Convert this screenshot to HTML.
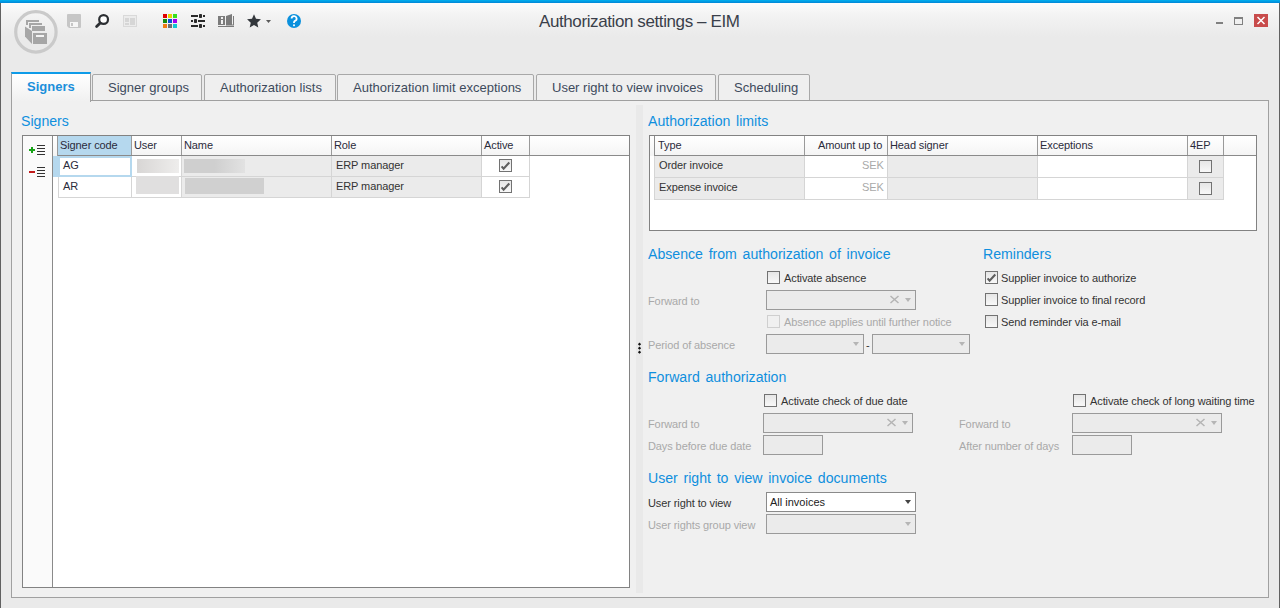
<!DOCTYPE html>
<html><head><meta charset="utf-8">
<style>
*{box-sizing:border-box;margin:0;padding:0}
html,body{width:1280px;height:608px;overflow:hidden}
body{position:relative;background:#eaeaea;font-family:"Liberation Sans",sans-serif;color:#333}
.a{position:absolute}
.t{position:absolute;white-space:nowrap;line-height:1}
.hd{color:#0f8fde;font-size:15.5px;word-spacing:2px;transform:scaleX(0.91);transform-origin:0 0}
.lbl{font-size:11px;color:#333;letter-spacing:-0.1px}
.dis{color:#a9a9a9}
.cb{position:absolute;width:13px;height:13px;border:1px solid #727272;background:linear-gradient(#e6e6e6,#f8f8f8)}
.cb.d{border-color:#cfcfcf;background:#f0f0f0}
.combo{position:absolute;border:1px solid #9a9a9a;background:#ebebeb}
.combo.en{background:#fff;border-color:#8a8a8a}
.arr{position:absolute;width:0;height:0;border-left:3.5px solid transparent;border-right:3.5px solid transparent;border-top:4px solid #b5b5b5}
.en .arr{border-top-color:#444}
.gr{position:absolute;background:#fff;border:1px solid #828282}
.gh{position:absolute;top:0;height:20px;background:linear-gradient(#fff,#f3f3f3);border-right:1px solid #a0a0a0;border-bottom:2px solid #8c8c8c}
.gc{position:absolute;border-right:1px solid #d9d9d9;border-bottom:1px solid #d9d9d9}
</style></head><body>
<!-- window chrome -->
<div class="a" style="left:0;top:0;width:1280px;height:3px;background:linear-gradient(#00b0f0,#0086d6)"></div>
<div class="a" style="left:0;top:3px;width:1280px;height:34px;background:linear-gradient(#fcfcfc,#f3f3f3 35%,#eaeaea)"></div>
<div class="a" style="left:0;top:3px;width:1px;height:605px;background:#616161"></div>
<div class="a" style="left:1279px;top:3px;width:1px;height:605px;background:#616161"></div>

<!-- logo -->
<svg class="a" style="left:0;top:0" width="320" height="60" viewBox="0 0 320 60">
<circle cx="35.9" cy="31.9" r="20.2" fill="none" stroke="#cacaca" stroke-width="3.2"/>
<g fill="#a6a6a6">
<path d="M26 20h13v2H28v3h-2z"/>
<path d="M29 23h13v2H31v3h-2z"/>
<rect x="32" y="26" width="13" height="5"/>
<path d="M25 26.5L32 31V44L25 36.5z"/>
<rect x="33" y="33" width="14" height="11"/>
</g>
<rect x="36" y="35" width="8" height="2" fill="#f4f4f4"/>
<!-- save -->
<path d="M68 14h12a1 1 0 0 1 1 1v12a1 1 0 0 1 -1 1H69l-2-2V15a1 1 0 0 1 1-1z" fill="#c6c6c6"/>
<rect x="70" y="22" width="8" height="5" fill="#f6f6f6"/>
<rect x="71" y="23" width="2" height="3" fill="#c6c6c6"/>
<!-- search -->
<circle cx="103.6" cy="19.5" r="4.4" fill="#fff" stroke="#2c2f33" stroke-width="2.2"/>
<line x1="100.2" y1="23" x2="96.6" y2="26.6" stroke="#2c2f33" stroke-width="2.8" stroke-linecap="round"/>
<!-- layout -->
<rect x="123.5" y="15.5" width="13" height="11" fill="#ececec" stroke="#d9d9d9"/>
<rect x="125" y="18" width="4" height="4" fill="#d6d6d6"/>
<rect x="125" y="23" width="4" height="2" fill="#d6d6d6"/>
<rect x="130" y="18" width="5" height="7" fill="#d6d6d6"/>
<!-- color grid -->
<rect x="163" y="14" width="4" height="4" fill="#e00000"/>
<rect x="168" y="14" width="4" height="4" fill="#e6d500"/>
<rect x="173" y="14" width="4" height="4" fill="#35e01c"/>
<rect x="163" y="19" width="4" height="4" fill="#168a10"/>
<rect x="168" y="19" width="4" height="4" fill="#0a50d8"/>
<rect x="173" y="19" width="4" height="4" fill="#a000f0"/>
<rect x="163" y="24" width="4" height="4" fill="#f07a12"/>
<rect x="168" y="24" width="4" height="4" fill="#6b6f74"/>
<rect x="173" y="24" width="4" height="4" fill="#10c6d2"/>
<!-- sliders -->
<g fill="#2a2a2a">
<rect x="191" y="15" width="7" height="2"/><rect x="199" y="14" width="3" height="4" rx="0.8"/><rect x="203" y="15" width="2" height="2"/>
<rect x="191" y="20" width="2" height="2"/><rect x="194" y="19" width="3" height="4" rx="0.8"/><rect x="198" y="20" width="7" height="2"/>
<rect x="191" y="25" width="7" height="2"/><rect x="199" y="24" width="3" height="4" rx="0.8"/><rect x="203" y="25" width="2" height="2"/>
</g>
<!-- book -->
<g fill="#7b7b7b">
<rect x="218" y="16" width="7" height="9"/>
<path d="M226 16L232 14V25L226 25z"/>
<path d="M233 16h1v9.5h-8v-1h7z"/>
<rect x="218" y="26" width="16" height="1"/>
</g>
<rect x="221" y="17" width="2" height="2" fill="#f2f2f2"/><rect x="221" y="20" width="2" height="4" fill="#f2f2f2"/>
<!-- star -->
<path d="M254.00 14.30L256.00 18.85L260.94 19.34L257.23 22.65L258.29 27.51L254.00 25.00L249.71 27.51L250.77 22.65L247.06 19.34L252.00 18.85z" fill="#33373c"/>
<path d="M266 20h5l-2.5 3z" fill="#5a5a5a"/>
<!-- help -->
<circle cx="294" cy="21" r="7" fill="#0a90dd"/>
<path d="M291.6 18.6a2.5 2.5 0 1 1 3.4 2.3c-.8.4-1 .8-1 1.6v.6" fill="none" stroke="#fff" stroke-width="1.8"/>
<rect x="293.1" y="24.4" width="1.8" height="1.8" fill="#fff"/>
</svg>

<!-- title -->
<div class="t" style="left:539px;top:13px;font-size:17px;letter-spacing:-0.4px;color:#3a3f4a">Authorization settings – EIM</div>

<!-- window controls -->
<div class="a" style="left:1216px;top:22px;width:7px;height:2px;background:#808080"></div>
<div class="a" style="left:1234px;top:17px;width:9px;height:8px;border:1px solid #808080;border-top-width:2px"></div>
<div class="a" style="left:1254px;top:14px;width:14px;height:13px;background:#c84b4b"></div><svg class="a" style="left:1254px;top:14px" width="14" height="13"><path d="M3.5 3L10.5 10M10.5 3L3.5 10" stroke="#fff" stroke-width="1.5"/></svg>

<!-- tabs -->
<div class="a" style="left:92px;top:74px;width:110px;height:27px;border:1px solid #a8a8a8;border-radius:2px 2px 0 0;background:#efefef"></div>
<div class="t" style="left:108px;top:81px;font-size:13px;color:#3d4a5c">Signer groups</div>
<div class="a" style="left:204px;top:74px;width:132px;height:27px;border:1px solid #a8a8a8;border-radius:2px 2px 0 0;background:#efefef"></div>
<div class="t" style="left:220px;top:81px;font-size:13px;color:#3d4a5c">Authorization lists</div>
<div class="a" style="left:337px;top:74px;width:197px;height:27px;border:1px solid #a8a8a8;border-radius:2px 2px 0 0;background:#efefef"></div>
<div class="t" style="left:353px;top:81px;font-size:13px;color:#3d4a5c">Authorization limit exceptions</div>
<div class="a" style="left:536px;top:74px;width:180px;height:27px;border:1px solid #a8a8a8;border-radius:2px 2px 0 0;background:#efefef"></div>
<div class="t" style="left:552px;top:81px;font-size:13px;color:#3d4a5c">User right to view invoices</div>
<div class="a" style="left:718px;top:74px;width:92px;height:27px;border:1px solid #a8a8a8;border-radius:2px 2px 0 0;background:#efefef"></div>
<div class="t" style="left:734px;top:81px;font-size:13px;color:#3d4a5c">Scheduling</div>

<!-- panel -->
<div class="a" style="left:11px;top:100px;width:1258px;height:498px;border:1px solid #a0a0a0;background:#f0f0f0"></div>
<!-- active tab -->
<div class="a" style="left:11px;top:72px;width:80px;height:30px;background:linear-gradient(#fff,#f0f0f0);border-left:1px solid #a0a0a0;border-right:1px solid #a0a0a0;border-top:2px solid #0e9be8"></div>
<div class="t" style="left:27px;top:80px;font-size:13px;font-weight:bold;color:#1a8fdb">Signers</div>


<!-- LEFT -->
<div class="t hd" style="left:21px;top:113px">Signers</div>
<div class="gr" style="left:22px;top:135px;width:608px;height:453px"></div>
<div class="a" style="left:23px;top:136px;width:30px;height:451px;background:#fafafa;border-right:1px solid #8a8a8a"></div>
<!-- add/remove icons -->
<div class="a" style="left:29px;top:149px;width:6px;height:2px;background:#17a317"></div>
<div class="a" style="left:31px;top:147px;width:2px;height:6px;background:#17a317"></div>
<div class="a" style="left:37px;top:145px;width:8px;height:1px;background:#333;box-shadow:0 3px 0 #333,0 6px 0 #333,0 9px 0 #333"></div>
<div class="a" style="left:29px;top:171px;width:6px;height:2px;background:#c31c1c"></div>
<div class="a" style="left:37px;top:167px;width:8px;height:1px;background:#333;box-shadow:0 3px 0 #333,0 6px 0 #333,0 9px 0 #333"></div>
<!-- grid header -->
<div class="a" style="left:53px;top:136px;width:576px;height:20px;background:linear-gradient(#fff,#f4f4f4)"></div><div class="a" style="left:57px;top:155px;width:572px;height:1px;background:#8a8a8a"></div>
<div class="a" style="left:57px;top:136px;width:1px;height:20px;background:#9a9a9a"></div>
<div class="a" style="left:58px;top:136px;width:74px;height:19px;background:#b5d8ee;border-right:1px solid #9a9a9a"></div>
<div class="a" style="left:131px;top:136px;width:1px;height:19px;background:#9a9a9a"></div>
<div class="a" style="left:181px;top:136px;width:1px;height:19px;background:#9a9a9a"></div>
<div class="a" style="left:331px;top:136px;width:1px;height:19px;background:#9a9a9a"></div>
<div class="a" style="left:481px;top:136px;width:1px;height:19px;background:#9a9a9a"></div>
<div class="a" style="left:529px;top:136px;width:1px;height:19px;background:#9a9a9a"></div>
<div class="t lbl" style="left:60px;top:140px;color:#2b2b3b">Signer code</div>
<div class="t lbl" style="left:134px;top:140px;color:#2b2b3b">User</div>
<div class="t lbl" style="left:184px;top:140px;color:#2b2b3b">Name</div>
<div class="t lbl" style="left:334px;top:140px;color:#2b2b3b">Role</div>
<div class="t lbl" style="left:484px;top:140px;color:#2b2b3b">Active</div>
<!-- rows -->
<div class="a" style="left:53px;top:156px;width:79px;height:21px;background:#b5d8ee"></div>
<div class="a" style="left:60px;top:158px;width:70px;height:17px;background:#fff"></div>
<div class="a" style="left:132px;top:156px;width:50px;height:21px;background:#fff;border-right:1px solid #d5d5d5;border-bottom:1px solid #d5d5d5"></div>
<div class="a" style="left:182px;top:156px;width:150px;height:21px;background:#ebebeb;border-right:1px solid #d5d5d5;border-bottom:1px solid #d5d5d5"></div>
<div class="a" style="left:332px;top:156px;width:150px;height:21px;background:#ebebeb;border-right:1px solid #d5d5d5;border-bottom:1px solid #d5d5d5"></div>
<div class="a" style="left:482px;top:156px;width:48px;height:21px;background:#fff;border-right:1px solid #d5d5d5;border-bottom:1px solid #d5d5d5"></div>
<div class="a" style="left:58px;top:177px;width:74px;height:21px;background:#fff;border-left:1px solid #d5d5d5;border-right:1px solid #d5d5d5;border-bottom:1px solid #d5d5d5"></div>
<div class="a" style="left:132px;top:177px;width:50px;height:21px;background:#fff;border-right:1px solid #d5d5d5;border-bottom:1px solid #d5d5d5"></div>
<div class="a" style="left:182px;top:177px;width:150px;height:21px;background:#ebebeb;border-right:1px solid #d5d5d5;border-bottom:1px solid #d5d5d5"></div>
<div class="a" style="left:332px;top:177px;width:150px;height:21px;background:#ebebeb;border-right:1px solid #d5d5d5;border-bottom:1px solid #d5d5d5"></div>
<div class="a" style="left:482px;top:177px;width:48px;height:21px;background:#fff;border-right:1px solid #d5d5d5;border-bottom:1px solid #d5d5d5"></div>
<div class="t lbl" style="left:63px;top:160px;color:#2b2b3b">AG</div>
<div class="t lbl" style="left:63px;top:181px;color:#2b2b3b">AR</div>
<div class="a" style="left:137px;top:159px;width:42px;height:14px;background:linear-gradient(90deg,#d8d6d5,#eeedec)"></div>
<div class="a" style="left:184px;top:159px;width:61px;height:14px;background:linear-gradient(90deg,#cfcfcf,#cfcfcf 50%,#e2e2e2)"></div>
<div class="a" style="left:136px;top:176px;width:43px;height:18px;background:#e0dfdf"></div>
<div class="a" style="left:185px;top:178px;width:79px;height:16px;background:#d0d0d0"></div>
<div class="t lbl" style="left:336px;top:160px">ERP manager</div>
<div class="t lbl" style="left:336px;top:181px">ERP manager</div>
<div class="cb ck" style="left:499px;top:159px"><svg class="a" style="left:0;top:0" width="11" height="11"><path d="M1.6 6.4L3.6 8.7L9.3 2.5" fill="none" stroke="#5e5e5e" stroke-width="2.1"/></svg></div>
<div class="cb ck" style="left:499px;top:180px"><svg class="a" style="left:0;top:0" width="11" height="11"><path d="M1.6 6.4L3.6 8.7L9.3 2.5" fill="none" stroke="#5e5e5e" stroke-width="2.1"/></svg></div>
<!-- splitter -->
<div class="a" style="left:636px;top:105px;width:7px;height:488px;background:#e9e9e9"></div>

<svg class="a" style="left:636px;top:340px" width="7" height="16"><g fill="#111"><path d="M3.5 2.6l1.6 1.6-1.6 1.6-1.6-1.6z"/><path d="M3.5 6.6l1.6 1.6-1.6 1.6-1.6-1.6z"/><path d="M3.5 10.6l1.6 1.6-1.6 1.6-1.6-1.6z"/></g></svg>
<!-- RIGHT -->
<div class="t hd" style="left:648px;top:113px">Authorization limits</div>
<div class="gr" style="left:649px;top:135px;width:608px;height:96px"></div>
<div class="a" style="left:650px;top:136px;width:606px;height:20px;background:linear-gradient(#fff,#f4f4f4)"></div><div class="a" style="left:654px;top:155px;width:602px;height:1px;background:#8a8a8a"></div>
<div class="a" style="left:654px;top:136px;width:1px;height:20px;background:#8c8c8c"></div>
<div class="a" style="left:804px;top:136px;width:1px;height:19px;background:#9a9a9a"></div>
<div class="a" style="left:887px;top:136px;width:1px;height:19px;background:#9a9a9a"></div>
<div class="a" style="left:1037px;top:136px;width:1px;height:19px;background:#9a9a9a"></div>
<div class="a" style="left:1187px;top:136px;width:1px;height:19px;background:#9a9a9a"></div>
<div class="a" style="left:1223px;top:136px;width:1px;height:19px;background:#9a9a9a"></div>
<div class="t lbl" style="left:658px;top:140px;color:#2b2b3b">Type</div>
<div class="t lbl" style="left:818px;top:140px;color:#2b2b3b">Amount up to</div>
<div class="t lbl" style="left:890px;top:140px;color:#2b2b3b">Head signer</div>
<div class="t lbl" style="left:1040px;top:140px;color:#2b2b3b">Exceptions</div>
<div class="t lbl" style="left:1190px;top:140px;color:#2b2b3b">4EP</div>
<!-- rows -->
<div class="a" style="left:654px;top:156px;width:151px;height:22px;background:#ebebeb;border:1px solid #d5d5d5;border-top:0"></div>
<div class="a" style="left:805px;top:156px;width:83px;height:22px;background:#fff;border-right:1px solid #d5d5d5;border-bottom:1px solid #d5d5d5"></div>
<div class="a" style="left:888px;top:156px;width:150px;height:22px;background:#ebebeb;border-right:1px solid #d5d5d5;border-bottom:1px solid #d5d5d5"></div>
<div class="a" style="left:1038px;top:156px;width:150px;height:22px;background:#fff;border-right:1px solid #d5d5d5;border-bottom:1px solid #d5d5d5"></div>
<div class="a" style="left:1188px;top:156px;width:36px;height:22px;background:#ebebeb;border-right:1px solid #d5d5d5;border-bottom:1px solid #d5d5d5"></div>
<div class="a" style="left:654px;top:178px;width:151px;height:22px;background:#ebebeb;border:1px solid #d5d5d5;border-top:0"></div>
<div class="a" style="left:805px;top:178px;width:83px;height:22px;background:#fff;border-right:1px solid #d5d5d5;border-bottom:1px solid #d5d5d5"></div>
<div class="a" style="left:888px;top:178px;width:150px;height:22px;background:#ebebeb;border-right:1px solid #d5d5d5;border-bottom:1px solid #d5d5d5"></div>
<div class="a" style="left:1038px;top:178px;width:150px;height:22px;background:#fff;border-right:1px solid #d5d5d5;border-bottom:1px solid #d5d5d5"></div>
<div class="a" style="left:1188px;top:178px;width:36px;height:22px;background:#ebebeb;border-right:1px solid #d5d5d5;border-bottom:1px solid #d5d5d5"></div>
<div class="t lbl" style="left:659px;top:160px">Order invoice</div>
<div class="t lbl" style="left:659px;top:182px">Expense invoice</div>
<div class="t lbl dis" style="left:862px;top:160px">SEK</div>
<div class="t lbl dis" style="left:862px;top:182px">SEK</div>
<div class="cb" style="left:1199px;top:160px"></div>
<div class="cb" style="left:1199px;top:182px"></div>

<!-- Absence -->
<div class="t hd" style="left:648px;top:246px">Absence from authorization of invoice</div>
<div class="cb" style="left:767px;top:271px"></div>
<div class="t lbl" style="left:784px;top:273px">Activate absence</div>
<div class="t lbl dis" style="left:648px;top:296px">Forward to</div>
<div class="combo" style="left:766px;top:290px;width:150px;height:20px"><svg class="a" style="left:122px;top:4px" width="11" height="9"><path d="M1.5 1L9.5 8M9.5 1L1.5 8" stroke="#b4b4b4" stroke-width="1.5"/></svg><div class="arr" style="left:138px;top:7px"></div></div>
<div class="cb d" style="left:767px;top:315px"></div>
<div class="t lbl dis" style="left:784px;top:317px">Absence applies until further notice</div>
<div class="t lbl dis" style="left:648px;top:340px">Period of absence</div>
<div class="combo" style="left:766px;top:334px;width:98px;height:20px"><div class="arr" style="left:86px;top:7px"></div></div>
<div class="t lbl" style="left:866px;top:340px">-</div>
<div class="combo" style="left:872px;top:334px;width:98px;height:20px"><div class="arr" style="left:86px;top:7px"></div></div>

<!-- Reminders -->
<div class="t hd" style="left:983px;top:246px">Reminders</div>
<div class="cb ck" style="left:985px;top:271px"><svg class="a" style="left:0;top:0" width="11" height="11"><path d="M1.6 6.4L3.6 8.7L9.3 2.5" fill="none" stroke="#5e5e5e" stroke-width="2.1"/></svg></div>
<div class="t lbl" style="left:1001px;top:273px">Supplier invoice to authorize</div>
<div class="cb" style="left:985px;top:293px"></div>
<div class="t lbl" style="left:1001px;top:295px">Supplier invoice to final record</div>
<div class="cb" style="left:985px;top:315px"></div>
<div class="t lbl" style="left:1001px;top:317px">Send reminder via e-mail</div>

<!-- Forward authorization -->
<div class="t hd" style="left:648px;top:369px">Forward authorization</div>
<div class="cb" style="left:764px;top:394px"></div>
<div class="t lbl" style="left:781px;top:396px">Activate check of due date</div>
<div class="t lbl dis" style="left:648px;top:419px">Forward to</div>
<div class="combo" style="left:763px;top:413px;width:150px;height:20px"><svg class="a" style="left:122px;top:4px" width="11" height="9"><path d="M1.5 1L9.5 8M9.5 1L1.5 8" stroke="#b4b4b4" stroke-width="1.5"/></svg><div class="arr" style="left:138px;top:7px"></div></div>
<div class="t lbl dis" style="left:648px;top:441px">Days before due date</div>
<div class="combo" style="left:763px;top:435px;width:60px;height:20px"></div>

<div class="cb" style="left:1073px;top:394px"></div>
<div class="t lbl" style="left:1090px;top:396px">Activate check of long waiting time</div>
<div class="t lbl dis" style="left:959px;top:419px">Forward to</div>
<div class="combo" style="left:1072px;top:413px;width:150px;height:20px"><svg class="a" style="left:122px;top:4px" width="11" height="9"><path d="M1.5 1L9.5 8M9.5 1L1.5 8" stroke="#b4b4b4" stroke-width="1.5"/></svg><div class="arr" style="left:138px;top:7px"></div></div>
<div class="t lbl dis" style="left:959px;top:441px">After number of days</div>
<div class="combo" style="left:1072px;top:435px;width:60px;height:20px"></div>

<!-- User right -->
<div class="t hd" style="left:648px;top:470px">User right to view invoice documents</div>
<div class="t lbl" style="left:648px;top:498px">User right to view</div>
<div class="combo en" style="left:766px;top:492px;width:150px;height:20px"><span class="t" style="left:3px;top:4px;font-size:11px;color:#222">All invoices</span><div class="arr" style="left:138px;top:7px"></div></div>
<div class="t lbl dis" style="left:648px;top:520px">User rights group view</div>
<div class="combo" style="left:766px;top:514px;width:150px;height:20px"><div class="arr" style="left:138px;top:7px"></div></div>
</body></html>
